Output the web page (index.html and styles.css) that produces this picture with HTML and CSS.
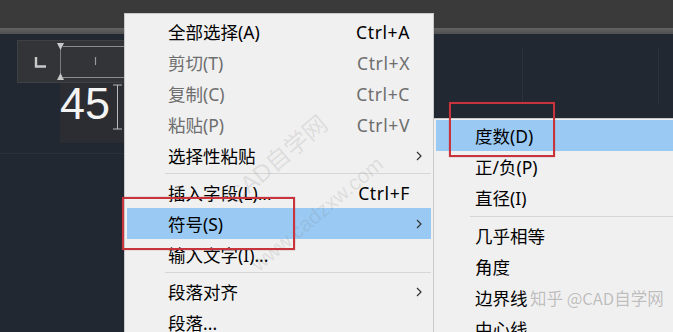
FILE: index.html
```html
<!DOCTYPE html>
<html lang="zh-CN">
<head>
<meta charset="utf-8">
<title>CAD 文字编辑右键菜单</title>
<link rel="stylesheet" href="styles.css">
</head>
<body>
<div class="screen">
  <div class="titlebar"></div>
  <div class="band"></div>
  <div class="canvas">
    <div class="ribbon">
      <svg class="ribbon-art" width="120" height="43" viewBox="0 0 120 43">
        <path d="M19 17 V26.5 H29" fill="none" stroke="#c9c9c9" stroke-width="2.4"/>
        <line x1="46" y1="6.5" x2="120" y2="6.5" stroke="#8c8c8c" stroke-width="1"/>
        <line x1="46" y1="37.5" x2="120" y2="37.5" stroke="#8c8c8c" stroke-width="1"/>
        <line x1="43.5" y1="9" x2="43.5" y2="34" stroke="#7a7a7a" stroke-width="1"/>
        <polygon points="40,3 47,3 43.5,10" fill="#c8c8c8"/>
        <polygon points="40,40 47,40 43.5,33" fill="#c8c8c8"/>
        <line x1="78.5" y1="17" x2="78.5" y2="25" stroke="#9a9a9a" stroke-width="1.2"/>
      </svg>
    </div>
    <div class="editor">
      <span class="num">45</span>
      <svg class="ibeam" width="9" height="46" viewBox="0 0 9 46">
        <line x1="4.5" y1="1" x2="4.5" y2="45" stroke="#b9b9b9" stroke-width="1"/>
        <line x1="0" y1="1" x2="9" y2="1" stroke="#b9b9b9" stroke-width="1"/>
        <line x1="0" y1="45" x2="9" y2="45" stroke="#b9b9b9" stroke-width="1"/>
      </svg>
    </div>
    <div class="gridline gl1"></div>
    <div class="gridline gl2"></div>
    <div class="hline"></div>
  </div>

  <div class="menu main-menu">
    <div class="row"><span class="label">全部选择(A)</span><span class="key">Ctrl+A</span><span class="arr"></span></div>
    <div class="row off"><span class="label">剪切(T)</span><span class="key">Ctrl+X</span><span class="arr"></span></div>
    <div class="row off"><span class="label">复制(C)</span><span class="key">Ctrl+C</span><span class="arr"></span></div>
    <div class="row off"><span class="label">粘贴(P)</span><span class="key">Ctrl+V</span><span class="arr"></span></div>
    <div class="row"><span class="label">选择性粘贴</span><span class="key"></span><span class="arr"><svg width="6" height="10" viewBox="0 0 6 10"><polyline points="1,1 5,5 1,9" fill="none" stroke="#333" stroke-width="1.2"/></svg></span></div>
    <div class="sep"></div>
    <div class="row"><span class="label">插入字段(L)...</span><span class="key">Ctrl+F</span><span class="arr"></span></div>
    <div class="row hi"><span class="label">符号(S)</span><span class="key"></span><span class="arr"><svg width="6" height="10" viewBox="0 0 6 10"><polyline points="1,1 5,5 1,9" fill="none" stroke="#333" stroke-width="1.2"/></svg></span></div>
    <div class="row"><span class="label">输入文字(I)...</span><span class="key"></span><span class="arr"></span></div>
    <div class="sep"></div>
    <div class="row"><span class="label">段落对齐</span><span class="key"></span><span class="arr"><svg width="6" height="10" viewBox="0 0 6 10"><polyline points="1,1 5,5 1,9" fill="none" stroke="#333" stroke-width="1.2"/></svg></span></div>
    <div class="row"><span class="label">段落...</span><span class="key"></span><span class="arr"></span></div>
  </div>

  <div class="menu sub-menu">
    <div class="row hi"><span class="label">度数(D)</span></div>
    <div class="row"><span class="label">正/负(P)</span></div>
    <div class="row"><span class="label">直径(I)</span></div>
    <div class="sep"></div>
    <div class="row"><span class="label">几乎相等</span></div>
    <div class="row"><span class="label">角度</span></div>
    <div class="row"><span class="label">边界线</span></div>
    <div class="row"><span class="label">中心线</span></div>
  </div>

  <div class="wm-diag wm1">CAD自学网</div>
  <div class="wm-diag wm2">www.cadzxw.com</div>

  <div class="redbox rb1"></div>
  <div class="redbox rb2"></div>

  <div class="wm-zhihu">知乎 @CAD自学网</div>
</div>
</body>
</html>
```

FILE: styles.css
```css
html, body {
  margin: 0;
  padding: 0;
}
body {
  width: 673px;
  height: 332px;
  overflow: hidden;
  background: #212831;
}
.screen {
  position: relative;
  width: 673px;
  height: 332px;
  overflow: hidden;
  display: flex;
  flex-direction: column;
  font-family: "Noto Sans", "Noto Sans CJK SC", sans-serif;
}
.titlebar {
  height: 28px;
  background: #3a3a3a;
  flex: none;
}
.band {
  height: 6px;
  background: linear-gradient(#636363, #4f4f4f);
  flex: none;
}
.canvas {
  position: relative;
  flex: 1;
  background: #212831;
  padding: 6px 0 0 17px;
}
.ribbon {
  width: 120px;
  height: 43px;
  background: #333438;
  box-shadow: inset 0 0 0 1px #3e4044;
}
.ribbon-art {
  display: block;
}
.editor {
  margin-left: 43px;
  width: 70px;
  height: 60px;
  background: #2b2d32;
  display: flex;
  align-items: flex-start;
}
.num {
  font-family: "Liberation Sans", Arial, sans-serif;
  font-size: 45px;
  line-height: 40px;
  color: #f4f4f4;
  margin-top: 1px;
}
.ibeam {
  margin-left: 3px;
  margin-top: 1px;
  display: block;
}
.gridline {
  position: absolute;
  top: 14px;
  width: 1px;
  height: 56px;
  background: #2b323b;
}
.gl1 { left: 522px; }
.gl2 { left: 658px; }
.hline {
  position: absolute;
  left: 0;
  top: 119px;
  width: 124px;
  height: 1px;
  background: #29303a;
}

/* menus */
.menu {
  position: absolute;
  background: #f0f0f0;
  box-sizing: border-box;
  font-size: 17.5px;
  color: #000;
}
.main-menu {
  left: 124px;
  top: 13px;
  width: 310px;
  height: 340px;
  border: 1px solid #c9c9c9;
  padding: 2px 2px;
}
.sub-menu {
  left: 433px;
  top: 118px;
  width: 250px;
  height: 230px;
  border: 1px solid #c9c9c9;
  padding: 1px 0 0 2px;
}
.row {
  height: 31px;
  display: flex;
  align-items: center;
  white-space: nowrap;
}
.main-menu .row {
  padding-left: 41px;
}
.sub-menu .row {
  padding-left: 39px;
}
.row .label {
  flex: 1;
}
.row .key {
  letter-spacing: 0.6px;
}
.row .arr {
  width: 21px;
  display: flex;
  align-items: center;
}
.row .arr svg {
  margin-left: 6px;
  display: block;
}
.row.off {
  color: #6e6e6e;
}
.row.hi {
  background: #9acaf3;
}
.sep {
  height: 1px;
  background: #d6d6d6;
  margin: 2px 0 3px 38px;
}
.sub-menu .sep {
  margin: 3px 0 3px 34px;
}

/* overlays */
.redbox {
  position: absolute;
  box-sizing: border-box;
  border: 2px solid #c7343c;
  box-shadow: 0 0 1px rgba(160, 30, 40, 0.6);
}
.rb1 {
  left: 122px;
  top: 197px;
  width: 173px;
  height: 53px;
}
.rb2 {
  left: 449px;
  top: 102px;
  width: 106px;
  height: 55px;
}
.wm-diag {
  position: absolute;
  font-family: "Liberation Sans", "Noto Sans CJK SC", sans-serif;
  color: rgba(120, 120, 120, 0.16);
  white-space: nowrap;
  transform-origin: 0 100%;
  transform: rotate(-40deg);
}
.wm1 {
  left: 240px;
  top: 176px;
  font-size: 24px;
}
.wm2 {
  left: 262px;
  top: 252px;
  font-size: 21px;
}
.wm-zhihu {
  position: absolute;
  left: 530px;
  top: 287px;
  font-family: "Noto Sans CJK SC", sans-serif;
  font-size: 16.5px;
  line-height: 22px;
  color: #bdbdbd;
  text-shadow: 0 0 1px #ffffff;
  white-space: nowrap;
}
```
